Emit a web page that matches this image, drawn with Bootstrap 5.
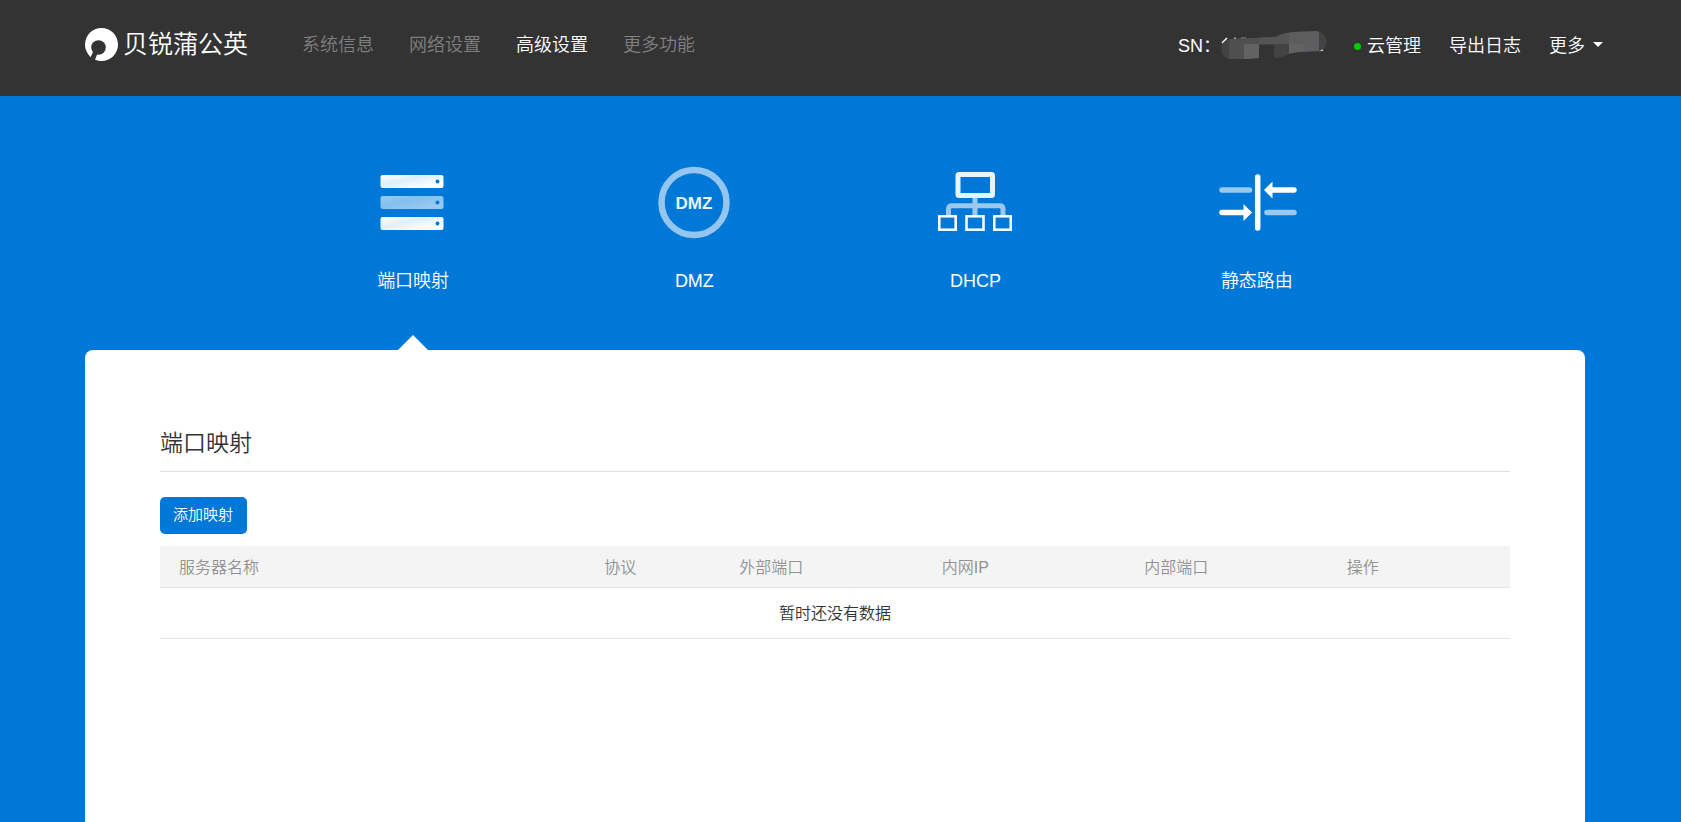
<!DOCTYPE html>
<html lang="zh-CN">
<head>
<meta charset="utf-8">
<meta name="viewport" content="width=device-width, initial-scale=1">
<title>贝锐蒲公英</title>
<link href="https://cdn.jsdelivr.net/npm/bootstrap@5.3.0/dist/css/bootstrap.min.css" rel="stylesheet">
<style>
  :root { --brand: #0078d8; }
  body {
    font-family: "Liberation Sans", "Noto Sans CJK SC", sans-serif;
    font-weight: 350;
    background: var(--brand);
    color: #333;
    padding-right: 11px;
  }
  .page-width { max-width: 1500px; }
  .topbar { background: #333; margin-right: -11px; padding-right: 11px; min-height: 96px; }
  .topbar .navbar-brand { font-size: 25px; line-height: 31px; gap: 5px; margin: 0 54px 0 0; padding: 0; }
  .topbar .nav-link { font-size: 18px; line-height: 26px; padding: 0; color: #fff; white-space: nowrap; }
  .main-nav { gap: 35px; padding-top: 2px; }
  .topbar .main-nav .nav-link { color: #808080; }
  .topbar .main-nav .nav-link.active { color: #fff; }
  .side-nav { gap: 28px; margin-right: -18px; padding-top: 4px; font-size: 18px; line-height: 26px; }
  .side-nav .nav-link { gap: 6px; }
  .side-nav .dropdown-toggle::after { margin-left: 8px; }
  .serial { margin-right: -2px; }
  .status-dot { width: 7px; height: 7px; background: #0c0; }
  .bar-row { padding-top: 27px; }
  .feature-tabs { width: 75%; }
  .feature-tabs .nav-link { color: #fff; font-size: 18px; line-height: 26px; padding: 66px 0 56px; border-radius: 0; position: relative; }
  .feature-tabs svg { display: block; margin: 0 auto 26px; }
  .feature-tabs .active::after {
    content: ""; position: absolute; left: 50%; bottom: 0; margin-left: -15px;
    border: 15px solid transparent; border-top: 0; border-bottom-color: #fff;
  }
  .dmz-mark { font: bold 17px "Liberation Sans Narrow", "Liberation Sans", sans-serif; }
  .panel { border: 0; border-radius: 8px 8px 0 0; padding: 75px 75px 0; min-height: calc(100vh - 350px); color: #333; }
  .panel h1 { font-size: 23px; line-height: 36px; font-weight: 350; padding-bottom: 10px; margin-bottom: 25px; border-bottom: 1px solid #e0e0e0; }
  .btn-add { background: var(--brand); color: #fff; font-size: 15px; font-weight: 350; line-height: 23px; padding: 6px 14px 8px 13px; border: 0; border-radius: 5px; margin-bottom: 12px; }
  .btn-add:hover { background: #0069bd; color: #fff; }
  .map-table { font-size: 16px; line-height: 24px; color: #333; margin: 0; table-layout: fixed; }
  .map-table th { background: #f4f4f4; color: #929292; font-weight: 350; padding: 10px 0 7px 19px; border-color: #e4e4e4; }
  .map-table td { padding: 14px 0 12px; border-color: #e4e4e4; }
</style>
</head>
<body>
<header class="topbar">
  <nav class="container-fluid page-width px-0 d-flex align-items-center bar-row navbar-dark" aria-label="主导航">
    <a class="navbar-brand d-flex align-items-center text-white" href="#">
      <svg width="33" height="33" viewBox="0 0 33 33" aria-hidden="true">
        <circle cx="16.500" cy="16.500" r="16.500" fill="#fff"/>
        <circle cx="13.500" cy="19.500" r="7.300" fill="#333"/>
        <path fill="#333" d="M5 30.500L8 24L12.500 25.500L9.500 33Z"/>
      </svg>
      <span>贝锐蒲公英</span>
    </a>
    <ul class="nav main-nav flex-nowrap">
      <li class="nav-item"><a class="nav-link" href="#">系统信息</a></li>
      <li class="nav-item"><a class="nav-link" href="#">网络设置</a></li>
      <li class="nav-item"><a class="nav-link active" aria-current="page" href="#">高级设置</a></li>
      <li class="nav-item"><a class="nav-link" href="#">更多功能</a></li>
    </ul>
    <ul class="nav side-nav flex-nowrap align-items-center ms-auto text-white">
      <li class="d-flex align-items-center serial">
        <span>SN：</span>
        <svg width="107" height="30" viewBox="0 0 107 30" aria-hidden="true">
          <defs><clipPath id="mask-shape"><path d="M9 8Q22 7 34 7Q46 6 54 6Q62 2 72 1L96 0Q104 2 106 10Q106 17 99 20L78 21Q68 22 63 25Q58 27 53 27V14H38V27L27 28H9Q0 26 0 17Q1 10 9 8Z"/></clipPath></defs>
          <path stroke="#fff" stroke-width="1.500" d="M1 12L6 7M13 7.500H15M20 7.500H25M98 19.500L102 19"/>
          <g clip-path="url(#mask-shape)">
            <path fill="#434343" d="M0 0H107V30H0Z"/>
            <path fill="#4f4f4f" d="M8 0H38V13H8ZM8 13H23V30H8Z"/>
            <path fill="#626261" d="M23 13H38V30H23ZM68 13H83V30H68Z"/>
            <path fill="#545656" d="M38 0H68V13H38Z"/>
            <path fill="#5d5d5d" d="M68 0H98V13H68Z"/>
            <path fill="#5f5c62" d="M83 13H98V30H83Z"/>
          </g>
        </svg>
      </li>
      <li class="nav-item"><a class="nav-link d-flex align-items-center" href="#"><span class="status-dot rounded-circle"></span>云管理</a></li>
      <li class="nav-item"><a class="nav-link" href="#">导出日志</a></li>
      <li class="nav-item dropdown"><a class="nav-link dropdown-toggle" href="#" role="button" data-bs-toggle="dropdown" aria-expanded="false">更多</a></li>
    </ul>
  </nav>
</header>

<main class="container-fluid page-width px-0">
  <nav class="feature-tabs nav mx-auto row g-0 text-center" aria-label="高级设置">
    <a class="nav-link col-3 active" href="#">
      <svg width="80" height="80" viewBox="1 0 80 80" aria-hidden="true">
        <defs><linearGradient id="sheen" x1="0" y1="0" x2="1" y2="1"><stop offset="0" stop-color="#fff"/><stop offset=".4" stop-color="#dcf0fd"/><stop offset=".8" stop-color="#fff"/></linearGradient></defs>
        <g fill="url(#sheen)">
          <rect x="8.500" y="13" width="63" height="13" rx="2"/>
          <rect x="8.500" y="34" width="63" height="13" rx="2" opacity=".6"/>
          <rect x="8.500" y="55" width="63" height="13" rx="2"/>
        </g>
        <g fill="#0078d8"><circle cx="65.500" cy="19.500" r="1.900"/><circle cx="65.500" cy="40.500" r="1.900"/><circle cx="65.500" cy="61.500" r="1.900"/></g>
      </svg>端口映射</a>
    <a class="nav-link col-3" href="#">
      <svg width="80" height="80" viewBox="0 0 80 80" aria-hidden="true">
        <circle cx="40" cy="40.500" r="32.500" fill="none" stroke="#fff" stroke-opacity=".58" stroke-width="6.500"/>
        <text class="dmz-mark" x="40" y="46.500" text-anchor="middle" fill="#e8f5fe">DMZ</text>
      </svg>DMZ</a>
    <a class="nav-link col-3" href="#">
      <svg width="80" height="80" viewBox="1 0 80 80" fill="none" aria-hidden="true">
        <path stroke="#99c9ef" stroke-width="5" d="M40 36V53M13.500 53V47Q13.500 43.700 17 43.700H64.500Q68 43.700 68 47V53"/>
        <rect x="23" y="12.500" width="34.500" height="21" rx="1" stroke="#e6f4fd" stroke-width="5"/>
        <g stroke="#f4faff" stroke-width="2.600"><rect x="4.300" y="54.300" width="16.400" height="13.400"/><rect x="31.500" y="54.300" width="17" height="13.400"/><rect x="59.300" y="54.300" width="16.400" height="13.400"/></g>
      </svg>DHCP</a>
    <a class="nav-link col-3" href="#">
      <svg width="80" height="80" viewBox="0 0 80 80" aria-hidden="true">
        <g stroke="#fff" stroke-width="5.500" stroke-linecap="round">
          <path stroke="#99c9ef" d="M5 28H32.500M50 50.500H77"/>
          <path d="M40.700 15V66M54 28H77M5 50.500H28"/>
        </g>
        <path fill="#fff" d="M47 28L55.500 19.500V36.500ZM35 50.500L26.500 42V59Z"/>
      </svg>静态路由</a>
  </nav>
  <section class="card panel">
    <h1>端口映射</h1>
    <div><button type="button" class="btn btn-add">添加映射</button></div>
    <table class="table map-table">
      <colgroup><col style="width:31.5%"><col style="width:10%"><col style="width:15%"><col style="width:15%"><col style="width:15%"><col style="width:13.5%"></colgroup>
      <thead><tr><th scope="col">服务器名称</th><th scope="col">协议</th><th scope="col">外部端口</th><th scope="col">内网IP</th><th scope="col">内部端口</th><th scope="col">操作</th></tr></thead>
      <tbody><tr><td colspan="6" class="text-center">暂时还没有数据</td></tr></tbody>
    </table>
  </section>
</main>
<script src="https://cdn.jsdelivr.net/npm/bootstrap@5.3.0/dist/js/bootstrap.bundle.min.js"></script>
</body>
</html>
